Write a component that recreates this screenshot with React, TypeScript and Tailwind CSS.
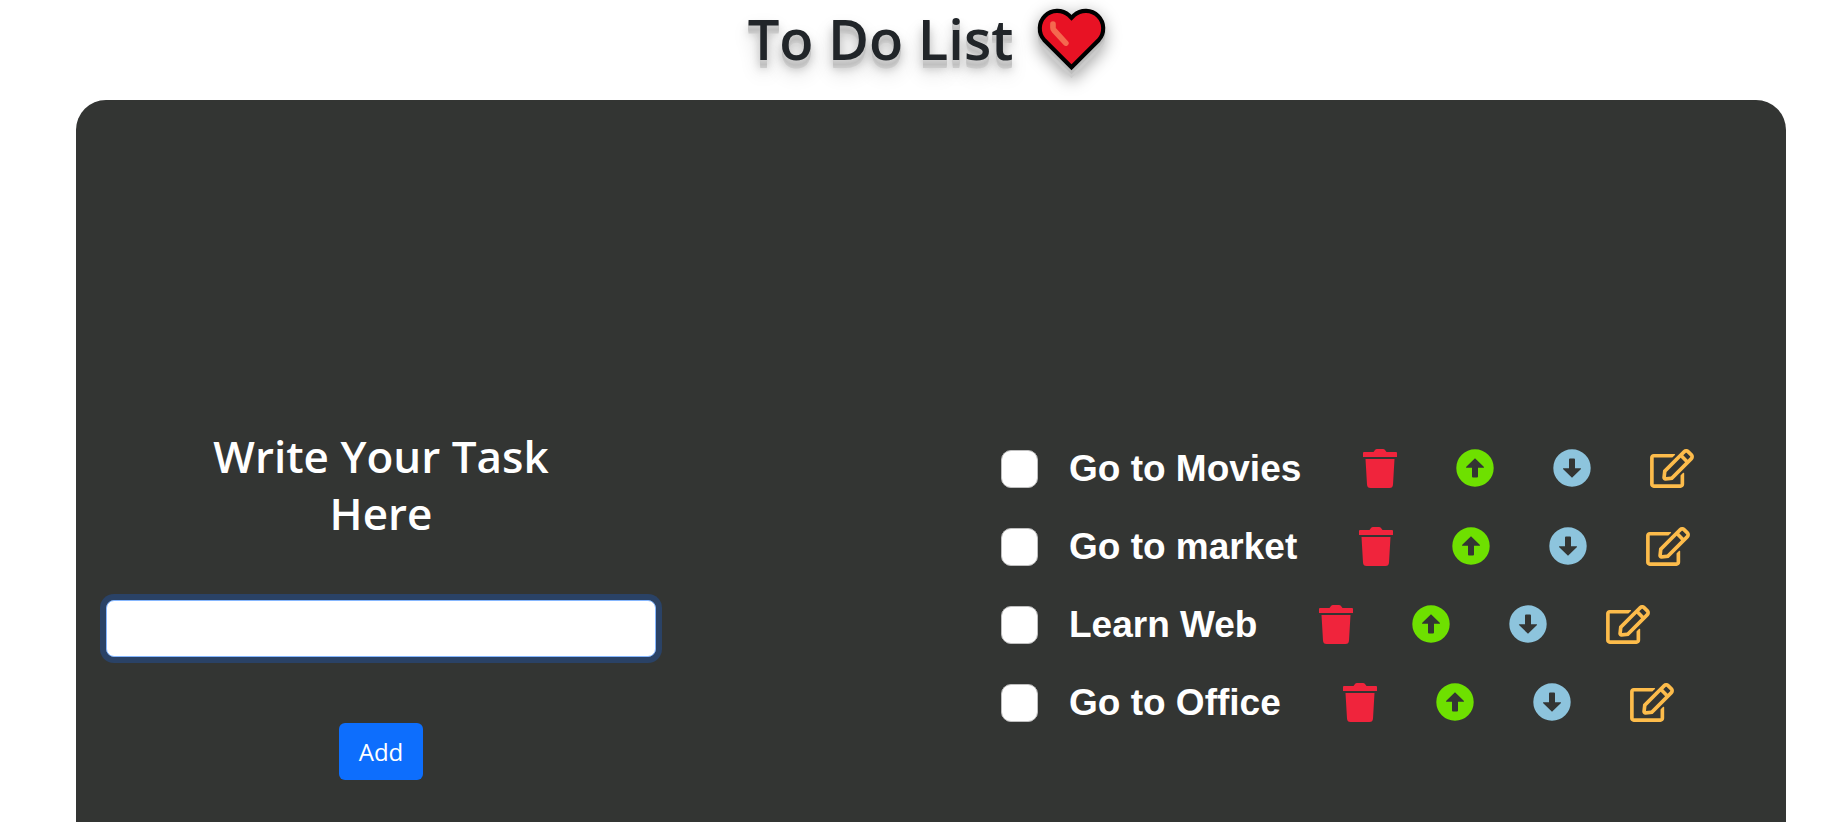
import { useState } from "react";
import { FaRegEdit } from "react-icons/fa";

const initialTasks = ["Go to Movies", "Go to market", "Learn Web", "Go to Office"];

function HeartIcon() {
  return (
    <svg
      viewBox="0 0 67 62"
      aria-hidden="true"
      className="mt-2 h-[64px] w-[69px] shrink-0 overflow-visible [filter:drop-shadow(0_4px_0_#bdbdbd)_drop-shadow(0_4px_0_#cbcbcb)_drop-shadow(0_4px_8px_rgba(0,0,0,0.35))]"
    >
      <path
        d="M33.500 57.500 L7 31 A17 17 0 0 1 31 7 L33.500 9.500 L36 7 A17 17 0 0 1 60 31 Z"
        fill="#e81224"
        stroke="#000"
        strokeWidth="4"
      />
      <path d="M15.500 15.500 V19 Q15.500 20.500 16.500 21.500 L28 34" fill="none" stroke="#f4694f" strokeWidth="5.500" strokeLinecap="round" strokeLinejoin="round" />
    </svg>
  );
}

function TrashIcon() {
  return (
    <svg viewBox="0 0 34 39" aria-hidden="true" className="h-[39px] w-[34px]" fill="#f0243c">
      <path d="M0 4 Q0 3 1 3 H10.500 L12 1 Q12.700 0 14 0 H20 Q21.300 0 22 1 L23.500 3 H33 Q34 3 34 4 V8 H0 Z" />
      <path d="M2.500 10 H31.500 L30 35.500 Q29.800 39 26.500 39 H7.500 Q4.200 39 4 35.500 Z" />
    </svg>
  );
}

function ArrowCircleIcon({ down = false }: { down?: boolean }) {
  return (
    <svg
      viewBox="0 0 38 38"
      aria-hidden="true"
      className={down ? "h-[38px] w-[38px] rotate-180 text-[#8dc4dd]" : "h-[38px] w-[38px] text-[#6ee000]"}
    >
      <path
        fill="currentColor"
        fillRule="evenodd"
        d="M19 0.300 A18.700 18.700 0 1 1 19 37.700 A18.700 18.700 0 1 1 19 0.300 Z M19 9.200 L10 18 Q9.600 18.800 10.500 18.800 H16 V27.500 Q16 28.500 17 28.500 H21 Q22 28.500 22 27.500 V18.800 H27.500 Q28.400 18.800 28 18 Z"
      />
    </svg>
  );
}

export default function App() {
  const [tasks, setTasks] = useState(initialTasks);
  const [draft, setDraft] = useState("");

  const move = (from: number, to: number) => {
    if (to < 0 || to >= tasks.length) return;
    const next = [...tasks];
    [next[from], next[to]] = [next[to], next[from]];
    setTasks(next);
  };

  const remove = (index: number) => setTasks(tasks.filter((_, i) => i !== index));

  return (
    <div className="flex min-h-screen flex-col bg-white pr-[62px] pl-[76px] font-['Open_Sans','Noto_Sans',sans-serif]">
      <h1 className="flex h-[100px] items-start justify-center gap-6 pr-2 text-[56px] leading-[76px] font-semibold text-[#212529]">
        <span className="[text-shadow:0_1px_0_#ccc,0_2px_0_#c9c9c9,0_3px_0_#c6c6c6,0_4px_0_#c3c3c3,0_5px_0_#c0c0c0,0_6px_0_#c4c4c4,0_7px_0_#c8c8c8,0_8px_0_#cbcbcb,0_8px_10px_rgba(0,0,0,0.25),0_12px_20px_rgba(0,0,0,0.2)]">
          To Do List
        </span>
        <HeartIcon />
      </h1>

      <main className="grid flex-1 grid-cols-[925fr_785fr] items-start rounded-t-[30px] bg-[#333533] pt-[328px]">
        <form
          className="ml-[30px] flex max-w-[550px] flex-col items-center"
          onSubmit={(e) => {
            e.preventDefault();
            if (draft.trim()) setTasks([...tasks, draft.trim()]);
            setDraft("");
          }}
        >
          <label htmlFor="task" className="max-w-[400px] text-center text-[44px] leading-[57px] font-semibold text-white">
            Write Your Task Here
          </label>
          <input
            id="task"
            type="text"
            value={draft}
            onChange={(e) => setDraft(e.target.value)}
            className="mt-[58px] h-[57px] w-full rounded-lg border border-[#86b7fe] bg-white px-4 text-2xl text-[#212529] ring-6 ring-[#2a4266] outline-none"
          />
          <button type="submit" className="mt-[66px] h-[57px] rounded-md bg-[#0d6efd] px-5 text-2xl text-white">
            Add
          </button>
        </form>

        <ul className="flex flex-col gap-10 pt-[22px]">
          {tasks.map((task, i) => (
            <li key={task} className="flex h-[38px] items-center">
              <input
                id={`task-${i}`}
                type="checkbox"
                className="h-[38px] w-[37px] shrink-0 appearance-none rounded-[10px] border border-[#bfbfbf] bg-white checked:bg-[#0d6efd]"
              />
              <label
                htmlFor={`task-${i}`}
                className="ml-[31px] font-['Liberation_Sans',Arial,sans-serif] text-[37px] leading-[38px] font-bold whitespace-nowrap text-white"
              >
                {task}
              </label>
              <div className="mb-0.5 ml-[62px] flex items-center gap-[59px]">
                <button type="button" aria-label="Delete" onClick={() => remove(i)}>
                  <TrashIcon />
                </button>
                <button type="button" aria-label="Move up" onClick={() => move(i, i - 1)}>
                  <ArrowCircleIcon />
                </button>
                <button type="button" aria-label="Move down" onClick={() => move(i, i + 1)}>
                  <ArrowCircleIcon down />
                </button>
                <button
                  type="button"
                  aria-label="Edit"
                  onClick={() => {
                    setDraft(task);
                    remove(i);
                  }}
                >
                  <FaRegEdit className="h-[39px] w-[44px] text-[#fdbc4b]" />
                </button>
              </div>
            </li>
          ))}
        </ul>
      </main>
    </div>
  );
}
